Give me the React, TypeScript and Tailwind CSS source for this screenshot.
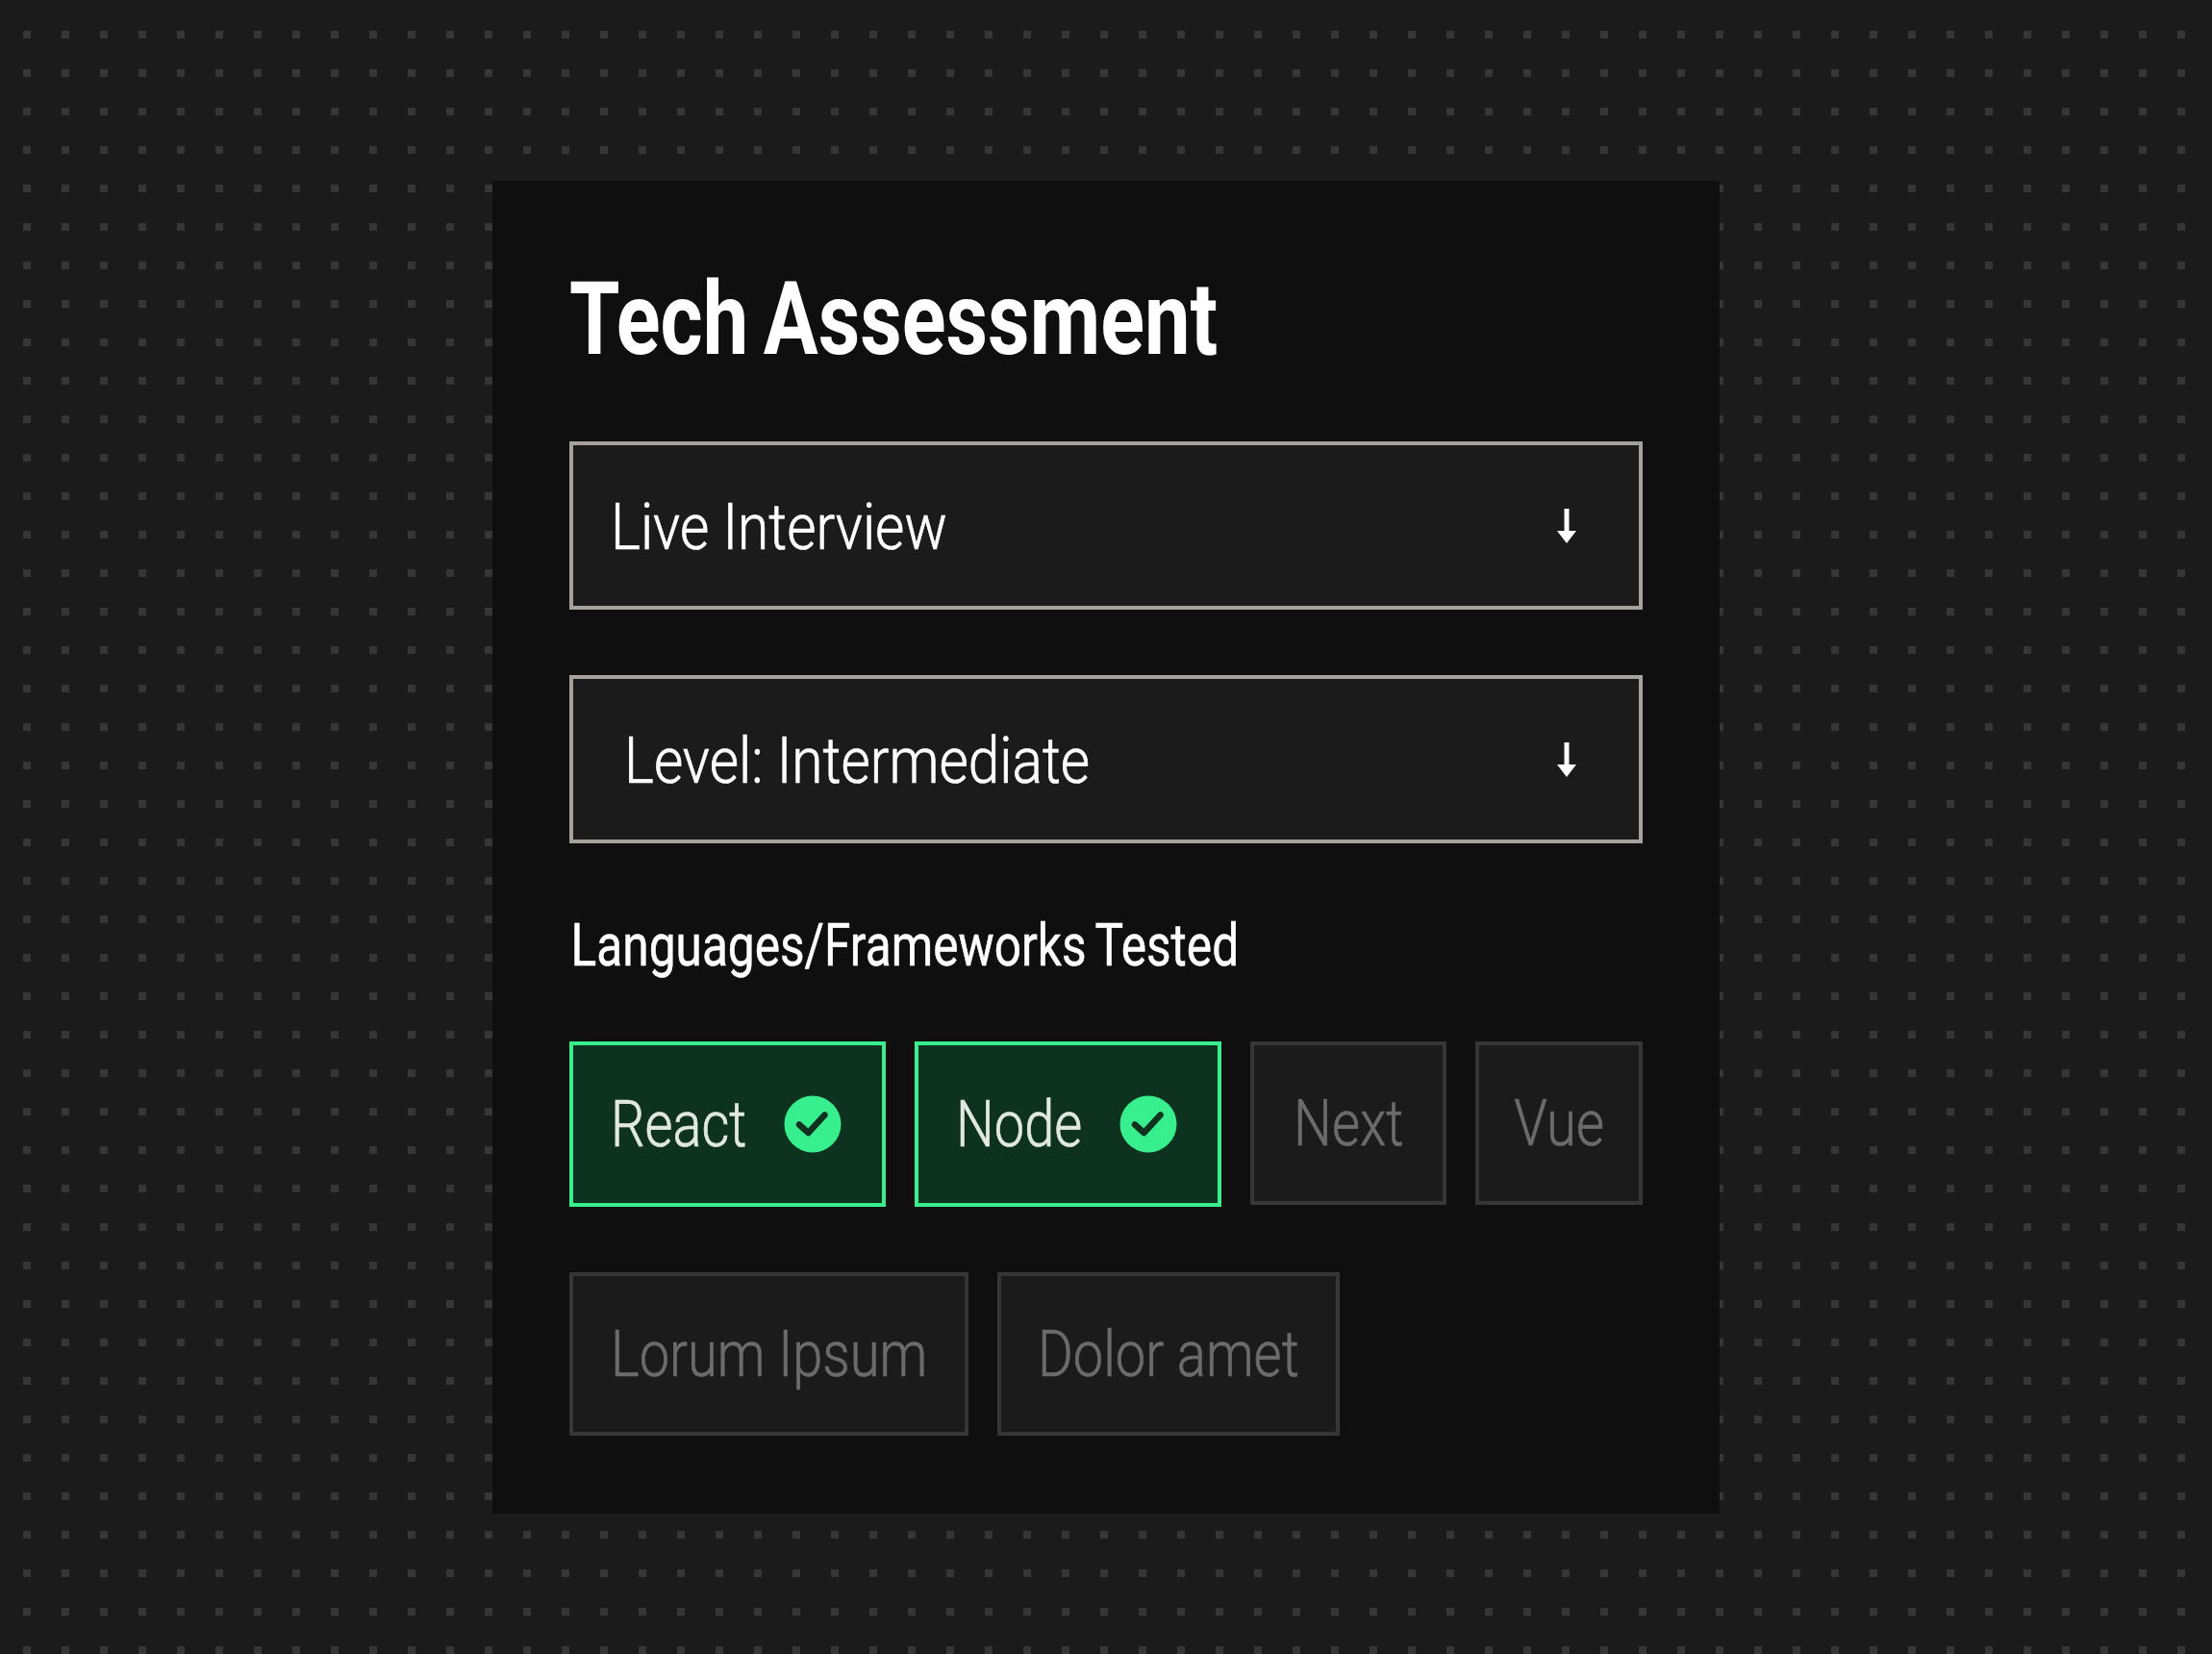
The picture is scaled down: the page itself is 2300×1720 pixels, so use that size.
function ArrowDown() {
  return (
    <svg width="20" height="36" viewBox="0 0 20 36" className="shrink-0">
      <path d="M7.5 0h5v23h7.5L10 36 0 23h7.5z" fill="#ffffff" />
    </svg>
  );
}

function CheckBadge() {
  return (
    <svg width="60" height="60" viewBox="0 0 60 60" className="shrink-0">
      <circle cx="30" cy="30" r="29.5" fill="#38ef8d" />
      <path
        d="M16 30.5l9.5 8.5L42.5 20.5"
        fill="none"
        stroke="#0d3320"
        strokeWidth="6.5"
        strokeLinecap="round"
        strokeLinejoin="round"
      />
    </svg>
  );
}

function Select({ label, indent }: { label: string; indent: string }) {
  return (
    <div
      className={`flex h-[175px] w-full items-center justify-between border-4 border-[#a5a29e] bg-[#1b1b1b] pr-[65px] ${indent}`}
    >
      <span className="inline-block origin-left scale-x-[0.888] pt-[4px] font-['Roboto',sans-serif] text-[66px] leading-none font-light text-white [-webkit-text-stroke:0.7px_currentColor]">
        {label}
      </span>
      <ArrowDown />
    </div>
  );
}

function ActiveChip({ label, width }: { label: string; width: string }) {
  return (
    <div
      className={`flex h-[172px] items-center justify-between border-4 border-[#38ef8d] bg-[#0d3320] pr-[42px] pl-[39px] ${width}`}
    >
      <span className="inline-block origin-left scale-x-[0.848] pt-[2px] font-['Roboto',sans-serif] text-[66px] leading-none font-light text-[#e2e8e0] [-webkit-text-stroke:0.7px_currentColor]">
        {label}
      </span>
      <CheckBadge />
    </div>
  );
}

function IdleChip({ label, width }: { label: string; width: string }) {
  return (
    <div
      className={`flex h-[170px] items-center justify-center border-4 border-[#363636] bg-[#1b1b1b] ${width}`}
    >
      <span className="inline-block scale-x-[0.85] pt-[2px] font-['Roboto',sans-serif] text-[66px] leading-none font-light text-[#6b6b6b] [-webkit-text-stroke:0.7px_currentColor]">
        {label}
      </span>
    </div>
  );
}

export default function App() {
  return (
    <div className="h-[1720px] w-[2300px] bg-[#1b1b1b] bg-[conic-gradient(from_0deg_at_8px_8px,transparent_75%,#363636_0)] bg-[length:40px_40px] bg-[position:24px_32px] pt-[188px]">
      <div className="mx-auto h-[1386px] w-[1276px] bg-[#0f0f0f] px-[80px] pt-[86px]">
        <h1 className="origin-left scale-x-[0.8] font-['Roboto',sans-serif] text-[106px] leading-[116px] font-bold [word-spacing:-7px] whitespace-nowrap text-white">
          Tech Assessment
        </h1>

        <div className="mt-[69px] flex flex-col gap-[68px]">
          <Select label="Live Interview" indent="pl-[39px]" />
          <Select label="Level: Intermediate" indent="pl-[53px]" />
        </div>

        <h2 className="mt-[72px] origin-left scale-x-[0.8] pl-[2px] font-['Roboto',sans-serif] text-[62px] leading-[68px] font-normal [word-spacing:-3px] whitespace-nowrap text-white [-webkit-text-stroke:0.5px_currentColor]">
          Languages/Frameworks Tested
        </h2>

        <div className="mt-[66px] flex items-start gap-[30px]">
          <ActiveChip label="React" width="w-[330px]" />
          <ActiveChip label="Node" width="w-[320px]" />
          <IdleChip label="Next" width="w-[204px]" />
          <IdleChip label="Vue" width="w-[175px]" />
        </div>

        <div className="mt-[68px] flex gap-[30px]">
          <IdleChip label="Lorum Ipsum" width="w-[415px]" />
          <IdleChip label="Dolor amet" width="w-[356px]" />
        </div>
      </div>
    </div>
  );
}
